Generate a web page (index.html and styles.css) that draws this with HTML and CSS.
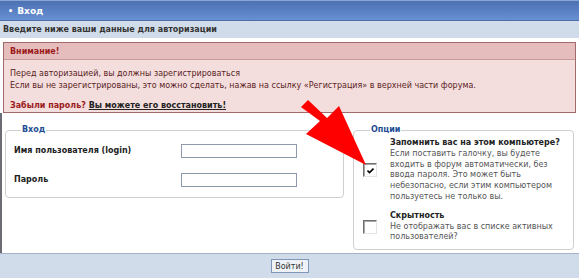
FILE: index.html
```html
<!DOCTYPE html>
<html lang="ru">
<head>
<meta charset="utf-8">
<title>Вход</title>
<link rel="stylesheet" href="styles.css">
</head>
<body>
<div class="page">
  <div class="cat-head"><span class="bullet">•</span> Вход</div>
  <div class="sub-head">Введите ниже ваши данные для авторизации</div>
  <div class="alert">
    <div class="alert-title">Внимание!</div>
    <div class="alert-body">
      <p>Перед авторизацией, вы должны зарегистрироваться<br>Если вы не зарегистрированы, это можно сделать, нажав на ссылку «Регистрация» в верхней части форума.</p>
      <p class="forgot"><span class="forgot-q">Забыли пароль?</span> <a href="#">Вы можете его восстановить!</a></p>
    </div>
  </div>
  <div class="main">
    <fieldset class="box login">
      <legend>Вход</legend>
      <div class="field"><label>Имя пользователя (login)</label><input type="text" class="txt"></div>
      <div class="field"><label>Пароль</label><input type="password" class="txt"></div>
    </fieldset>
    <fieldset class="box options">
      <legend>Опции</legend>
      <div class="opt opt-remember">
        <span class="cb"><svg width="7" height="7" viewBox="0 0 7 7"><path d="M0.5 3.5 L2.5 5.5 L6.5 1.5" fill="none" stroke="#000" stroke-width="1.6"/></svg></span>
        <div class="opt-text"><b>Запомнить вас на этом компьютере?</b><br>Если поставить галочку, вы будете входить в форум автоматически, без ввода пароля. Это может быть небезопасно, если этим компьютером пользуетесь не только вы.</div>
      </div>
      <div class="opt">
        <span class="cb"></span>
        <div class="opt-text"><b>Скрытность</b><br>Не отображать вас в списке активных пользователей?</div>
      </div>
    </fieldset>
    <svg class="arrow" width="80" height="75" viewBox="0 0 80 75"><polygon points="3,7 10,0 29,18 41,6 68,65 8,34 22,21" fill="#f00"/></svg>
  </div>
  <div class="foot"><button class="btn">Войти!</button></div>
</div>
</body>
</html>
```
FILE: styles.css
```css
html, body { margin: 0; padding: 0; background: #fff; }
body { font-family: "DejaVu Sans", Verdana, sans-serif; font-size: 8px; color: #333; }
.page { width: 579px; height: 278px; position: relative; overflow: hidden; }
.cat-head {
  height: 21px; line-height: 21px; box-sizing: border-box;
  background: linear-gradient(#4e72b4, #5b83c6 60%, #6890d2);
  border-top: 1px solid #87a5d6; border-bottom: 1px solid #4d6ea8;
  color: #fff; font-weight: bold; font-size: 9px; padding-left: 8px;
}
.bullet { font-size: 8px; margin-right: 1px; }
.sub-head {
  height: 17px; line-height: 17px; box-sizing: border-box;
  background: #d1dcea; font-weight: bold; color: #333; padding-left: 3px;
}
.alert { margin: 4px 3px 0 3px; border: 1px solid #a36a6c; background: #f3dddd; }
.alert-title {
  height: 17px; line-height: 17px; box-sizing: border-box; background: #e6bdbd;
  border-bottom: 1px solid #c89a9b; color: #9b1b1b; font-weight: bold; padding-left: 6px;
}
.alert-body { padding: 8px 6px 0; color: #5a1e1e; }
.alert-body p { margin: 0; line-height: 12px; }
.alert-body p.forgot { margin-top: 8px; font-weight: bold; }
.forgot-q { color: #9b1b1b; }
.forgot a { color: #222; text-decoration: underline; }
.main {
  position: relative; height: 140px; box-sizing: border-box;
  border-left: 2px solid #6c6c74; padding: 12px 6px 0 3px;
  display: grid; grid-template-columns: 339px 221px; column-gap: 9px; align-items: start;
}
.box {
  margin: 0; border: 1px solid #cfcfcf; border-radius: 4px; padding: 0;
  min-width: 0;
}
.box legend { color: #1d4c93; font-weight: bold; padding: 0 1px; margin-left: 7px; line-height: 10px; }
.login { height: 73px; padding: 1px 0 0 8px; box-sizing: border-box; }
.field { display: flex; align-items: center; height: 29px; }
.field label { width: 167px; font-weight: bold; color: #222; }
.txt {
  width: 116px; height: 14px; box-sizing: border-box; margin: 0; padding: 0 2px;
  border: 1px solid #8c9aab; background: #fff; font: inherit;
}
.options { height: 125px; padding: 3px 0 0 9px; box-sizing: border-box; }
.opt { display: flex; align-items: center; }
.opt-remember { margin-bottom: 8px; }
.cb {
  width: 14px; height: 14px; box-sizing: border-box; flex: none;
  border: 1px solid; border-color: #6f6f6f #e4e4e4 #e4e4e4 #6f6f6f;
  box-shadow: inset 1px 1px 0 #a8a8a8; background: #fff;
  display: flex; align-items: center; justify-content: center;
}
.opt-text { margin-left: 13px; width: 180px; line-height: 10.8px; color: #555; }
.opt-text b { color: #222; }
.arrow { position: absolute; left: 296px; top: -13px; overflow: visible; }
.foot {
  height: 25px; box-sizing: border-box; background: #d1dcea; border-top: 1px solid #a3b3c9;
  display: flex; justify-content: center; padding-top: 5px;
}
.btn {
  height: 14px; width: 38px; margin: 0; padding: 0; box-sizing: border-box;
  background: #eef2f7; border: 1px solid #8096b8; font: inherit; color: #333;
}
```
